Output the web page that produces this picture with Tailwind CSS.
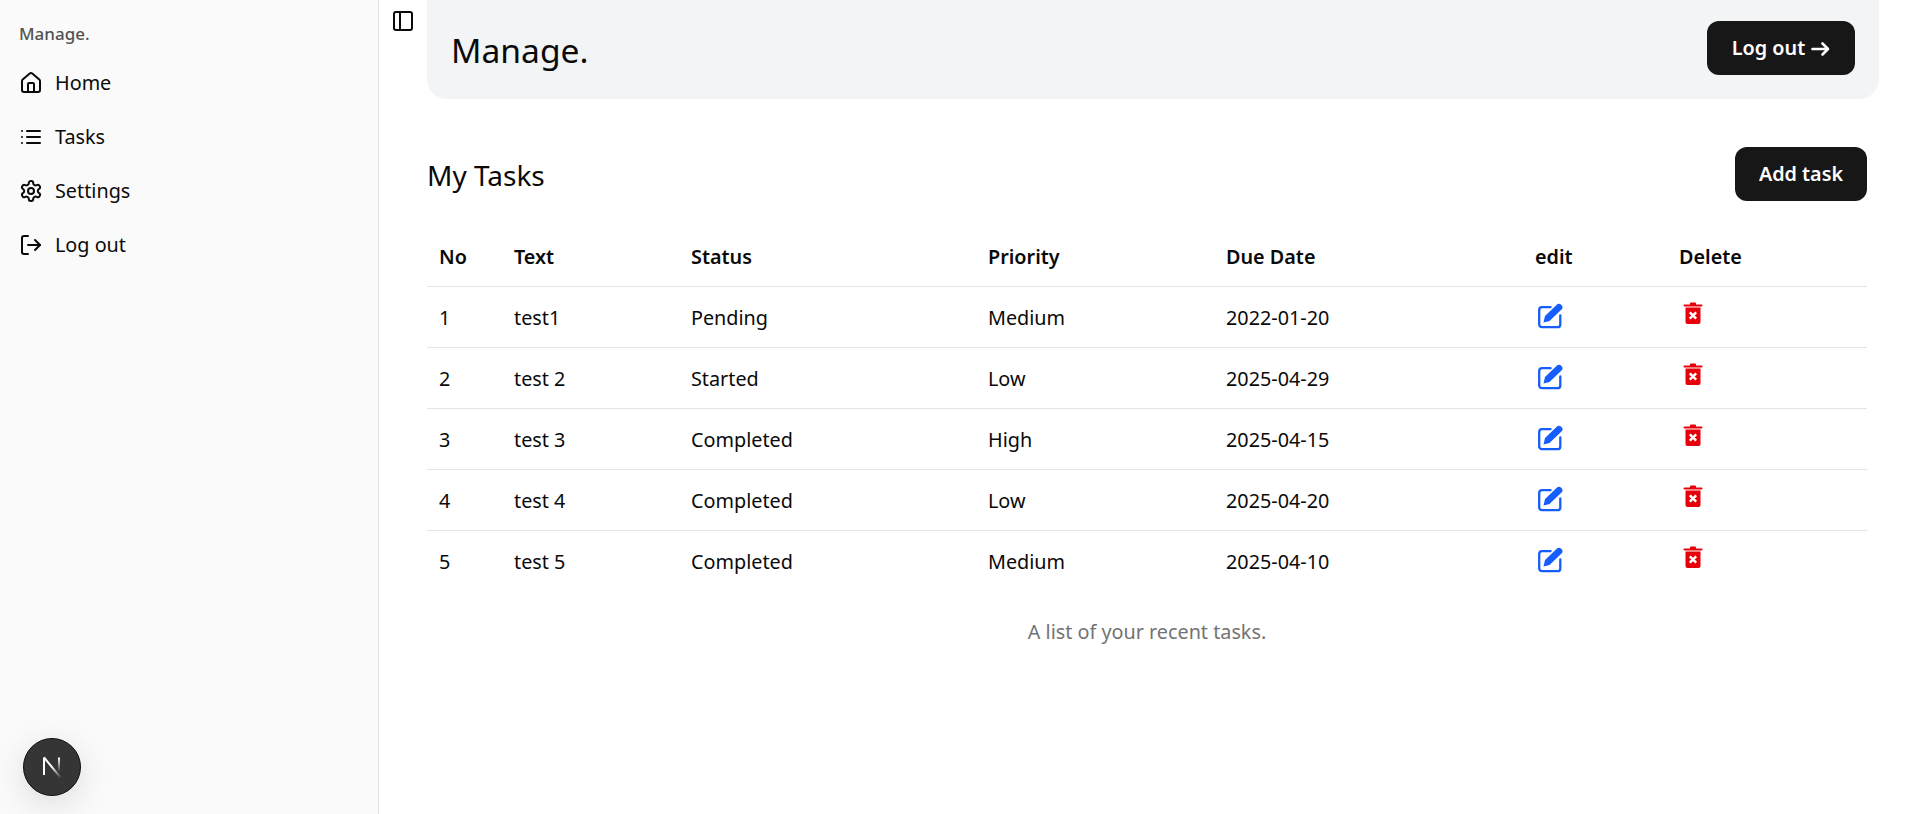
<!DOCTYPE html>
<html>
<head>
  <title>Manage.</title>
  <script src="https://cdn.jsdelivr.net/npm/@tailwindcss/browser@4"></script>
</head>
<body class="font-['Noto_Sans',sans-serif] text-[19.8px] text-[#0a0a0a] bg-white">
<div class="flex h-[814px] overflow-hidden">

  <!-- sidebar -->
  <aside class="w-[379px] shrink-0 bg-[#fafafa] border-r border-[#e5e5e5] px-[19px] pt-[22px]">
    <p class="text-[17px] leading-[24px] font-medium text-[#525252]">Manage.</p>
    <nav class="mt-[10px] flex flex-col">
      <a class="flex items-center gap-[12px] h-[54px]">
        <svg class="w-6 h-6 shrink-0" viewBox="0 0 24 24" fill="none" stroke="currentColor" stroke-width="2" stroke-linecap="round" stroke-linejoin="round"><path d="M15 21v-8a1 1 0 0 0-1-1h-4a1 1 0 0 0-1 1v8"/><path d="M3 10a2 2 0 0 1 .709-1.528l7-5.999a2 2 0 0 1 2.582 0l7 5.999A2 2 0 0 1 21 10v9a2 2 0 0 1-2 2H5a2 2 0 0 1-2-2z"/></svg>
        <span>Home</span>
      </a>
      <a class="flex items-center gap-[12px] h-[54px]">
        <svg class="w-6 h-6 shrink-0" viewBox="0 0 24 24" fill="none" stroke="currentColor" stroke-width="2" stroke-linecap="round" stroke-linejoin="round"><path d="M3 12h.01M3 18h.01M3 6h.01M8 12h13M8 18h13M8 6h13"/></svg>
        <span>Tasks</span>
      </a>
      <a class="flex items-center gap-[12px] h-[54px]">
        <svg class="w-6 h-6 shrink-0" viewBox="0 0 24 24" fill="none" stroke="currentColor" stroke-width="2" stroke-linecap="round" stroke-linejoin="round"><path d="M12.22 2h-.44a2 2 0 0 0-2 2v.18a2 2 0 0 1-1 1.73l-.43.25a2 2 0 0 1-2 0l-.15-.08a2 2 0 0 0-2.73.73l-.22.38a2 2 0 0 0 .73 2.73l.15.1a2 2 0 0 1 1 1.72v.51a2 2 0 0 1-1 1.74l-.15.09a2 2 0 0 0-.73 2.73l.22.38a2 2 0 0 0 2.73.73l.15-.08a2 2 0 0 1 2 0l.43.25a2 2 0 0 1 1 1.73V20a2 2 0 0 0 2 2h.44a2 2 0 0 0 2-2v-.18a2 2 0 0 1 1-1.73l.43-.25a2 2 0 0 1 2 0l.15.08a2 2 0 0 0 2.73-.73l.22-.39a2 2 0 0 0-.73-2.73l-.15-.08a2 2 0 0 1-1-1.74v-.5a2 2 0 0 1 1-1.74l.15-.09a2 2 0 0 0 .73-2.73l-.22-.38a2 2 0 0 0-2.73-.73l-.15.08a2 2 0 0 1-2 0l-.43-.25a2 2 0 0 1-1-1.73V4a2 2 0 0 0-2-2z"/><circle cx="12" cy="12" r="3"/></svg>
        <span>Settings</span>
      </a>
      <a class="flex items-center gap-[12px] h-[54px]">
        <svg class="w-6 h-6 shrink-0" viewBox="0 0 24 24" fill="none" stroke="currentColor" stroke-width="2" stroke-linecap="round" stroke-linejoin="round"><path d="M9 21H5a2 2 0 0 1-2-2V5a2 2 0 0 1 2-2h4"/><path d="m16 17 5-5-5-5"/><path d="M21 12H9"/></svg>
        <span>Log out</span>
      </a>
    </nav>
  </aside>

  <!-- main -->
  <main class="flex-1 flex min-w-0">
    <div class="w-[48px] shrink-0 pl-[12px] pt-[9px]">
      <svg class="w-6 h-6" viewBox="0 0 24 24" fill="none" stroke="currentColor" stroke-width="2" stroke-linecap="round" stroke-linejoin="round"><rect width="18" height="18" x="3" y="3" rx="2"/><path d="M9 3v18"/></svg>
    </div>
    <div class="flex-1 min-w-0 pr-[39px]">
      <header class="h-[99px] mr-[-12px] bg-[#f3f4f6] rounded-b-[20px] flex items-center justify-between pl-[24px] pr-[24px]">
        <h1 class="text-[33.6px] leading-[40px]">Manage.</h1>
        <button class="h-[54px] w-[148px] mb-[3px] rounded-[12px] bg-[#171717] text-white font-semibold flex items-center justify-center gap-[6px]">
          <span>Log out</span>
          <svg class="w-[19px] h-[16px] mt-[1px]" viewBox="0 0 19 16" fill="none" stroke="currentColor" stroke-width="2.600" stroke-linecap="round" stroke-linejoin="round"><path d="M1.500 8h15.500M11.500 2.500 17 8l-5.500 5.500"/></svg>
        </button>
      </header>

      <div class="mt-[48px] flex items-center justify-between h-[54px]">
        <h2 class="text-[28px] mt-[1px]">My Tasks</h2>
        <button class="h-[54px] w-[132px] rounded-[12px] bg-[#171717] text-white font-semibold">Add task</button>
      </div>

      <table class="w-full mt-[24px] table-fixed border-collapse">
        <colgroup>
          <col class="w-[75px]"><col class="w-[177px]"><col class="w-[297px]"><col class="w-[238px]"><col class="w-[309px]"><col class="w-[144px]"><col>
        </colgroup>
        <thead>
          <tr class="h-[61px] border-b border-[#e5e5e5] text-left">
            <th class="px-3 pt-[3px] font-semibold">No</th>
            <th class="px-3 pt-[3px] font-semibold">Text</th>
            <th class="px-3 pt-[3px] font-semibold">Status</th>
            <th class="px-3 pt-[3px] font-semibold">Priority</th>
            <th class="px-3 pt-[3px] font-semibold">Due Date</th>
            <th class="px-3 pt-[3px] font-semibold">edit</th>
            <th class="px-3 pt-[3px] font-semibold">Delete</th>
          </tr>
        </thead>
        <tbody id="rows"></tbody>
      </table>
      <p class="mt-[27px] leading-[28px] text-center text-[#737373]">A list of your recent tasks.</p>
    </div>
  </main>
</div>

<!-- dev badge -->
<div class="absolute left-[23px] top-[738px] w-[58px] h-[58px] rounded-full bg-[#353535] border-[1.5px] border-[#111] shadow-[0_8px_32px_rgba(0,0,0,0.12)] flex items-center justify-center">
  <svg class="w-[24px] h-[24px]" viewBox="0 0 24 24" fill="none">
    <defs><linearGradient id="ng" x1="0" y1="0" x2="1" y2="1"><stop offset="0.45" stop-color="#fff"/><stop offset="1" stop-color="#fff" stop-opacity="0"/></linearGradient>
    <linearGradient id="ng2" x1="0" y1="0" x2="0" y2="1"><stop offset="0" stop-color="#fff"/><stop offset="0.85" stop-color="#fff" stop-opacity="0"/></linearGradient></defs>
    <path d="M4 2.500v17.500" stroke="#fff" stroke-width="2"/>
    <path d="M4 2.500 L21 23" stroke="url(#ng)" stroke-width="2"/>
    <rect x="18" y="2.500" width="2" height="17" fill="url(#ng2)"/>
  </svg>
</div>

<script>
  const tareas = [
    [1, "test1", "Pending", "Medium", "2022-01-20"],
    [2, "test 2", "Started", "Low", "2025-04-29"],
    [3, "test 3", "Completed", "High", "2025-04-15"],
    [4, "test 4", "Completed", "Low", "2025-04-20"],
    [5, "test 5", "Completed", "Medium", "2025-04-10"],
  ];
  const editIcon = `<svg class="w-[26px] h-[26px] mt-[-2px] ml-[2px] text-[#155dfc]" viewBox="0 0 26 26" fill="none"><path d="M13.500 4.200H5A2.800 2.800 0 0 0 2.200 7V21.400A2.800 2.800 0 0 0 5 24.200H20.500A2.800 2.800 0 0 0 23.300 21.400V12.500" stroke="currentColor" stroke-width="2.300" stroke-linecap="round"/><path d="M6.500 19.500 8 13 19.500 2a3.200 3.200 0 0 1 5 4.500L12.500 18z" fill="currentColor"/></svg>`;
  const trashIcon = `<svg class="w-[20px] h-[24px] mt-[-8px] ml-[4px] text-[#e7000b]" viewBox="0 0 20 24"><path d="M7 2.500a1 1 0 0 1 1-1h4a1 1 0 0 1 1 1V3.500h5.500a.500.500 0 0 1 0 2H1.500a.500.500 0 0 1 0-2H7z" fill="currentColor"/><path d="M2.500 6.500h15V21a2 2 0 0 1-2 2h-11a2 2 0 0 1-2-2z" fill="currentColor"/><path d="M6.800 11.300l6.400 6.400M13.200 11.300l-6.400 6.400" stroke="#fff" stroke-width="2.400"/></svg>`;
  const rows = document.getElementById("rows");
  tareas.forEach((t, i) => {
    const tr = document.createElement("tr");
    tr.className = i < tareas.length - 1 ? "h-[61px] border-b border-[#e5e5e5]" : "h-[61px]";
    tr.innerHTML = t.map(v => `<td class="px-3 pt-[2px]">${v}</td>`).join("") +
      `<td class="px-3">${editIcon}</td><td class="px-3">${trashIcon}</td>`;
    rows.appendChild(tr);
  });
</script>
</body>
</html>
